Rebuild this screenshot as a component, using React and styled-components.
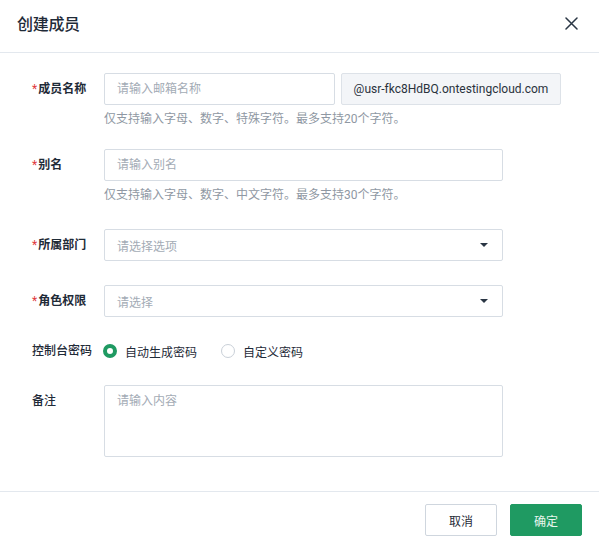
import styled, { createGlobalStyle } from 'styled-components';

const GlobalStyle = createGlobalStyle`
  html, body {
    margin: 0;
    padding: 0;
    background: #ffffff;
  }
  body {
    font-family: Roboto, "Noto Sans CJK SC", sans-serif;
    color: #1f2b38;
  }
`;

const Dialog = styled.div`
  width: 599px;
  height: 545px;
  display: flex;
  flex-direction: column;
  box-sizing: border-box;
  background: #fff;
`;

const Header = styled.div`
  height: 53px;
  box-sizing: border-box;
  display: flex;
  align-items: center;
  justify-content: space-between;
  padding: 0 20px 6px 17px;
  border-bottom: 1px solid #e3e8ee;
`;

const Title = styled.div`
  font-size: 16px;
  font-weight: 500;
  color: #1f2b38;
  letter-spacing: -0.3px;
`;

const CloseButton = styled.button`
  border: none;
  background: transparent;
  padding: 0;
  width: 16px;
  height: 16px;
  display: flex;
  align-items: center;
  justify-content: center;
  cursor: pointer;
`;

const Body = styled.div`
  flex: 1;
  padding: 20px 32px 0 32px;
  box-sizing: border-box;
`;

const FormItem = styled.div`
  display: flex;
  align-items: flex-start;
  margin-bottom: ${p => p.$mb}px;
`;

const Label = styled.div`
  width: 72px;
  flex-shrink: 0;
  line-height: 32px;
  font-size: 12px;
  font-weight: ${p => (p.$required ? 700 : 500)};
  color: #1f2b38;
  white-space: nowrap;
`;

const Star = styled.span`
  color: #e0393e;
  font-weight: 400;
  margin-right: 1px;
`;

const Control = styled.div`
  display: flex;
  flex-direction: column;
`;

const InputRow = styled.div`
  display: flex;
  gap: 6px;
`;

const Input = styled.input`
  width: ${p => p.$w || 399}px;
  height: 32px;
  box-sizing: border-box;
  border: 1px solid #d7dde4;
  border-radius: 2px;
  padding: 0 12px;
  font-family: Roboto, "Noto Sans CJK SC", sans-serif;
  font-size: 12px;
  color: #1f2b38;
  outline: none;
  &::placeholder {
    color: #a3abb5;
  }
`;

const Suffix = styled.div`
  width: 220px;
  height: 32px;
  box-sizing: border-box;
  border: 1px solid #dde2e8;
  border-radius: 2px;
  background: #f3f5f8;
  display: flex;
  align-items: center;
  justify-content: center;
  font-size: 12px;
  color: #2a323c;
`;

const Hint = styled.div`
  margin-top: 6px;
  font-size: 12px;
  line-height: 16px;
  color: #8f98a3;
  white-space: nowrap;
`;

const Select = styled.div`
  width: 399px;
  height: 32px;
  box-sizing: border-box;
  border: 1px solid #d7dde4;
  border-radius: 2px;
  padding: 0 14px 0 12px;
  display: flex;
  align-items: center;
  justify-content: space-between;
  font-size: 12px;
  color: #a3abb5;
`;

const Caret = styled.span`
  width: 0;
  height: 0;
  border-left: 4.5px solid transparent;
  border-right: 4.5px solid transparent;
  border-top: 4.5px solid #2a3644;
`;

const RadioGroup = styled.div`
  display: flex;
  align-items: center;
  height: 32px;
  gap: 24px;
  margin-left: -1px;
`;

const RadioItem = styled.label`
  display: flex;
  align-items: center;
  gap: 8px;
  font-size: 12px;
  color: #1f2b38;
`;

const RadioDot = styled.span`
  width: 14px;
  height: 14px;
  box-sizing: border-box;
  border-radius: 50%;
  border: ${p => (p.$checked ? '4.5px solid #1f9a62' : '1px solid #c9d0d8')};
  background: #fff;
`;

const TextArea = styled.textarea`
  width: 399px;
  height: 72px;
  box-sizing: border-box;
  border: 1px solid #d7dde4;
  border-radius: 2px;
  padding: 6px 12px;
  resize: none;
  font-family: Roboto, "Noto Sans CJK SC", sans-serif;
  font-size: 12px;
  line-height: 18px;
  outline: none;
  &::placeholder {
    color: #a3abb5;
  }
`;

const Footer = styled.div`
  height: 54px;
  box-sizing: border-box;
  border-top: 1px solid #e3e8ee;
  display: flex;
  justify-content: flex-end;
  align-items: flex-start;
  gap: 13px;
  padding: 12px 17px 0 0;
`;

const Button = styled.button`
  width: 72px;
  height: 32px;
  box-sizing: border-box;
  border-radius: 2px;
  font-family: Roboto, "Noto Sans CJK SC", sans-serif;
  font-size: 12px;
  cursor: pointer;
  border: 1px solid ${p => (p.$primary ? '#1f9a62' : '#cfd6de')};
  background: ${p => (p.$primary ? '#1f9a62' : '#fff')};
  color: ${p => (p.$primary ? '#e9f6ef' : '#1f2b38')};
`;

function CloseIcon() {
  return (
    <svg width="13" height="13" viewBox="0 0 13 13">
      <path d="M1 1L12 12M12 1L1 12" stroke="#2a3644" strokeWidth="1.5" strokeLinecap="round" />
    </svg>
  );
}

export default function App() {
  return (
    <>
      <GlobalStyle />
      <Dialog>
        <Header>
          <Title>创建成员</Title>
          <CloseButton><CloseIcon /></CloseButton>
        </Header>
        <Body>
          <FormItem $mb={22}>
            <Label $required><Star>*</Star>成员名称</Label>
            <Control>
              <InputRow>
                <Input $w={231} placeholder="请输入邮箱名称" />
                <Suffix>@usr-fkc8HdBQ.ontestingcloud.com</Suffix>
              </InputRow>
              <Hint>仅支持输入字母、数字、特殊字符。最多支持20个字符。</Hint>
            </Control>
          </FormItem>
          <FormItem $mb={26}>
            <Label $required><Star>*</Star>别名</Label>
            <Control>
              <Input placeholder="请输入别名" />
              <Hint>仅支持输入字母、数字、中文字符。最多支持30个字符。</Hint>
            </Control>
          </FormItem>
          <FormItem $mb={24}>
            <Label $required><Star>*</Star>所属部门</Label>
            <Select>请选择选项<Caret /></Select>
          </FormItem>
          <FormItem $mb={18}>
            <Label $required><Star>*</Star>角色权限</Label>
            <Select>请选择<Caret /></Select>
          </FormItem>
          <FormItem $mb={18}>
            <Label>控制台密码</Label>
            <RadioGroup>
              <RadioItem><RadioDot $checked />自动生成密码</RadioItem>
              <RadioItem><RadioDot />自定义密码</RadioItem>
            </RadioGroup>
          </FormItem>
          <FormItem $mb={0}>
            <Label>备注</Label>
            <TextArea placeholder="请输入内容" />
          </FormItem>
        </Body>
        <Footer>
          <Button>取消</Button>
          <Button $primary>确定</Button>
        </Footer>
      </Dialog>
    </>
  );
}
